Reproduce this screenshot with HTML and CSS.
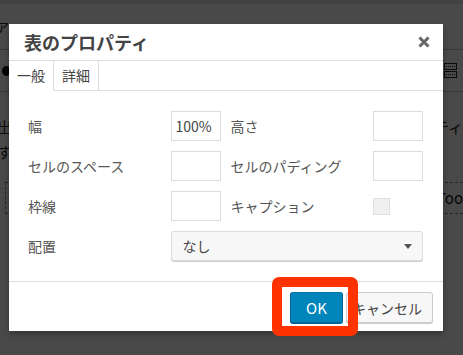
FILE: index.html
```html
<!DOCTYPE html>
<html lang="ja">
<head>
    <meta charset="UTF-8">
    <meta name="viewport" content="width=device-width, initial-scale=1.0">
    <title>表のプロパティ</title>
    <link rel="stylesheet" href="styles.css">
</head>
<body>
    <!-- editor behind the modal -->
    <div class="editor">
        <div class="admin-strip"></div>
        <div class="editor-head">
            <span class="cut-text">ア</span>
        </div>
        <div class="toolbar">
            <span class="tool-dot"></span>
            <svg class="tool-table" width="13" height="16" viewBox="0 0 13 16">
                <rect x="0.5" y="0.5" width="12" height="6" fill="none" stroke="#222"/>
                <rect x="0.5" y="8.5" width="12" height="6" fill="none" stroke="#222"/>
                <path d="M2 3.5h9M2 11.5h9" stroke="#222" stroke-dasharray="1 1"/>
            </svg>
        </div>
        <div class="content">
            <p class="line"><span>出</span><span>ティ</span></p>
            <p class="line"><span>す</span><span></span></p>
            <div class="code-box">Too</div>
        </div>
    </div>
    <div class="shade"></div>

    <div class="dialog">
        <div class="dialog-head">
            <h1>表のプロパティ</h1>
            <button type="button" class="close" aria-label="閉じる">
                <svg width="12" height="12" viewBox="0 0 12 12">
                    <path d="M1.5 1.5l9 9M10.5 1.5l-9 9" stroke="#666" stroke-width="3"/>
                </svg>
            </button>
        </div>

        <div class="tabs">
            <div class="tab active">一般</div>
            <div class="tab">詳細</div>
            <div class="tab-fill"></div>
        </div>

        <form class="form-grid">
            <label for="width">幅</label>
            <input id="width" type="text" value="100%">
            <label for="height">高さ</label>
            <input id="height" type="text">

            <label for="spacing">セルのスペース</label>
            <input id="spacing" type="text">
            <label for="padding">セルのパディング</label>
            <input id="padding" type="text">

            <label for="border">枠線</label>
            <input id="border" type="text">
            <label>キャプション</label>
            <div class="check-cell"><span class="checkbox"></span></div>

            <label>配置</label>
            <div class="select">なし<span class="arrow"></span></div>
        </form>

        <div class="dialog-foot">
            <button type="button" class="btn primary">OK</button>
            <button type="button" class="btn cancel">キャンセル</button>
        </div>
    </div>

    <div class="highlight"></div>
</body>
</html>
```

FILE: styles.css
```css
body {
    margin: 0;
    font-family: "Noto Sans CJK JP", "Noto Sans", sans-serif;
    color: #444;
    overflow: hidden;
}

/* background editor */
.editor {
    background: #f4f4f4;
    height: 355px;
}

.admin-strip {
    height: 4px;
    background: #dcdcdc;
}

.editor-head {
    height: 45px;
    border-bottom: 1px solid #bbb;
    display: flex;
    align-items: center;
}

.cut-text {
    margin-left: -5px;
    font-size: 14px;
    color: #222;
}

.toolbar {
    height: 41px;
    border-bottom: 1px solid #bbb;
    display: flex;
    align-items: center;
    justify-content: space-between;
    padding: 0 6px 0 2px;
}

.tool-dot {
    width: 9px;
    height: 10px;
    border-radius: 50%;
    background: #111;
}

.content {
    padding: 22px 0 0;
}

.line {
    margin: 0;
    display: flex;
    justify-content: space-between;
    font-size: 15px;
    line-height: 25px;
    color: #222;
}

.line span:first-child {
    margin-left: -3px;
}

.code-box {
    margin: 18px -20px 0 5px;
    height: 30px;
    border-top: 1px dashed #888;
    border-bottom: 1px dashed #888;
    border-left: 1px dashed #888;
    text-align: right;
    font-size: 15px;
    line-height: 30px;
    color: #111;
    padding-right: 20px;
}

.shade {
    position: absolute;
    inset: 0;
    background: rgba(0, 0, 0, 0.7);
}

/* modal */
.dialog {
    position: absolute;
    left: 9px;
    top: 24px;
    width: 434px;
    background: #fff;
    box-shadow: 0 3px 6px rgba(0, 0, 0, 0.3);
}

.dialog-head {
    height: 36px;
    border-bottom: 1px solid #ddd;
    display: flex;
    align-items: center;
    justify-content: space-between;
    padding: 0 13px 0 15px;
}

.dialog-head h1 {
    margin: 0;
    font-size: 18px;
    font-weight: bold;
    line-height: 24px;
    color: #444;
}

.close {
    border: none;
    background: none;
    padding: 0;
    width: 12px;
    height: 12px;
    display: flex;
}

.tabs {
    display: flex;
    height: 30px;
}

.tab {
    width: 44px;
    border-right: 1px solid #ddd;
    border-bottom: 1px solid #ddd;
    font-size: 14px;
    line-height: 29px;
    text-align: center;
    color: #444;
}

.tab.active {
    border-bottom-color: #fff;
}

.tab-fill {
    flex: 1;
    border-bottom: 1px solid #ddd;
}

.form-grid {
    display: grid;
    grid-template-columns: 1fr 50px 1fr 50px;
    grid-auto-rows: 30px;
    gap: 10px;
    padding: 20px 20px 20px 19px;
    margin: 0;
}

.form-grid label {
    font-size: 14px;
    line-height: 30px;
    color: #555;
}

.form-grid input {
    box-sizing: border-box;
    width: 50px;
    height: 30px;
    margin: 0;
    border: 1px solid #ddd;
    padding: 0 4px;
    font-family: inherit;
    font-size: 14px;
    color: #444;
    outline: none;
}

.check-cell {
    display: flex;
    align-items: center;
}

.checkbox {
    box-sizing: border-box;
    width: 17px;
    height: 17px;
    border: 1px solid #e0e0e0;
    background: #f0f0f0;
}

.select {
    grid-column: 2 / 5;
    box-sizing: border-box;
    height: 30px;
    border: 1px solid #ddd;
    border-radius: 3px;
    background: #f7f7f7;
    box-shadow: 0 1px 0 #ccc;
    padding: 0 11px;
    font-size: 14px;
    line-height: 28px;
    color: #444;
    display: flex;
    justify-content: space-between;
    align-items: center;
}

.arrow {
    width: 0;
    height: 0;
    border-left: 4px solid transparent;
    border-right: 4px solid transparent;
    border-top: 5px solid #555;
    margin-right: -1px;
}

.dialog-foot {
    border-top: 1px solid #ddd;
    height: 50px;
    padding: 10px 10px 0 0;
    box-sizing: border-box;
    display: flex;
    justify-content: flex-end;
    align-items: flex-start;
    gap: 3px;
}

.btn {
    box-sizing: border-box;
    height: 31px;
    padding: 0 8px;
    border: 1px solid #ccc;
    border-radius: 3px;
    background: #f7f7f7;
    box-shadow: 0 1px 0 #ccc;
    font-family: inherit;
    font-size: 14px;
    color: #444;
    white-space: nowrap;
}

.btn.primary {
    width: 53px;
    background: #0085ba;
    border-color: #0073aa #006799 #006799;
    box-shadow: 0 1px 0 #006799;
    color: #fff;
    font-size: 15px;
}

.btn.cancel {
    width: 87px;
    padding: 0 10px 0 0;
    text-align: right;
    overflow: hidden;
}

/* annotation */
.highlight {
    position: absolute;
    left: 272px;
    top: 277px;
    width: 86px;
    height: 59px;
    box-sizing: border-box;
    border: 10px solid #ff3300;
    border-radius: 7px;
}
```
